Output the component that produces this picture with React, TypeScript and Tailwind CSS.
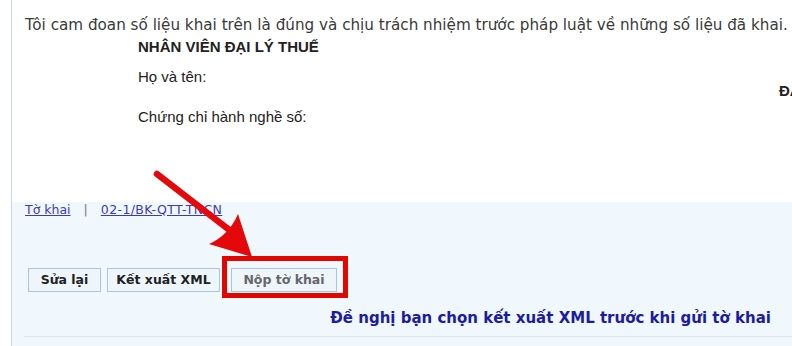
export default function App() {
  return (
    <div className="relative w-[792px] h-[346px] overflow-hidden bg-white text-[#333]">
      <div className="ml-[11px] h-full border-l border-[#c9d9e6] flex flex-col">
        {/* Cam đoan */}
        <div className="h-[202px] bg-white shrink-0 font-['Liberation_Sans',Arial,sans-serif]">
          <p className="pl-[13px] pt-[14px] text-[15.2px] leading-[22px] whitespace-nowrap font-['DejaVu_Sans',Verdana,sans-serif] text-[#3a3a3a]">
            Tôi cam đoan số liệu khai trên là đúng và chịu trách nhiệm trước pháp luật về những số liệu đã khai.
          </p>
          <div className="flex pl-[126px] mt-[2px]">
            <div className="w-[641px] shrink-0">
              <p className="font-bold text-[15px] leading-[18px] text-[#222]">NHÂN VIÊN ĐẠI LÝ THUẾ</p>
              <p className="mt-[12px] text-[15px] leading-[18px] text-[#222]">Họ và tên:</p>
              <p className="mt-[22px] text-[15px] leading-[18px] text-[#222]">Chứng chỉ hành nghề số:</p>
            </div>
            <p className="mt-[44px] font-bold text-[15px] leading-[18px] text-[#222] whitespace-nowrap">
              ĐẠI DIỆN
            </p>
          </div>
        </div>

        {/* Thao tác */}
        <div className="flex-1 bg-[#f0f7fd] font-['DejaVu_Sans',Verdana,sans-serif]">
          <div className="flex items-center pl-[13px] text-[12.5px] leading-[16px] text-[#3b3bb8]">
            <a href="#" className="underline">Tờ khai</a>
            <span className="ml-[13px] mr-[13px] text-[#777]">|</span>
            <a href="#" className="underline tracking-[0.4px]">02-1/BK-QTT-TNCN</a>
          </div>
          <div className="flex pl-[16px] mt-[50px]">
            <button className="w-[73px] h-[24px] bg-[#eef6fb] border border-[#a9c7d8] text-[12.5px] font-bold text-[#222]">
              Sửa lại
            </button>
            <button className="ml-[6px] w-[113px] h-[24px] bg-[#eef6fb] border border-[#a9c7d8] text-[12.5px] font-bold text-[#222]">
              Kết xuất XML
            </button>
            <button className="ml-[11px] w-[106px] h-[24px] bg-[#eef6fb] border border-[#a9c7d8] text-[12.5px] font-bold text-[#666]">
              Nộp tờ khai
            </button>
          </div>
          <p className="mt-[16px] pr-[21px] text-right text-[15px] leading-[20px] font-bold text-[#1c1ca0] whitespace-nowrap">
            Đề nghị bạn chọn kết xuất XML trước khi gửi tờ khai
          </p>
          <div className="mt-[8px] ml-[12px] border-t border-[#dbe5ee]" />
        </div>
      </div>

      {/* Đánh dấu */}
      <svg className="absolute left-0 top-0" width="792" height="346" viewBox="0 0 792 346">
        <line x1="157" y1="174" x2="232" y2="232" stroke="#e5080a" strokeWidth="6.5" strokeLinecap="round" />
        <path d="M209 244 Q229 235 238 214 L252 257 Z" fill="#e5080a" />
      </svg>
      <div className="absolute left-[222px] top-[256px] w-[126px] h-[42px] border-[5px] border-[#e10600]" />
    </div>
  );
}
